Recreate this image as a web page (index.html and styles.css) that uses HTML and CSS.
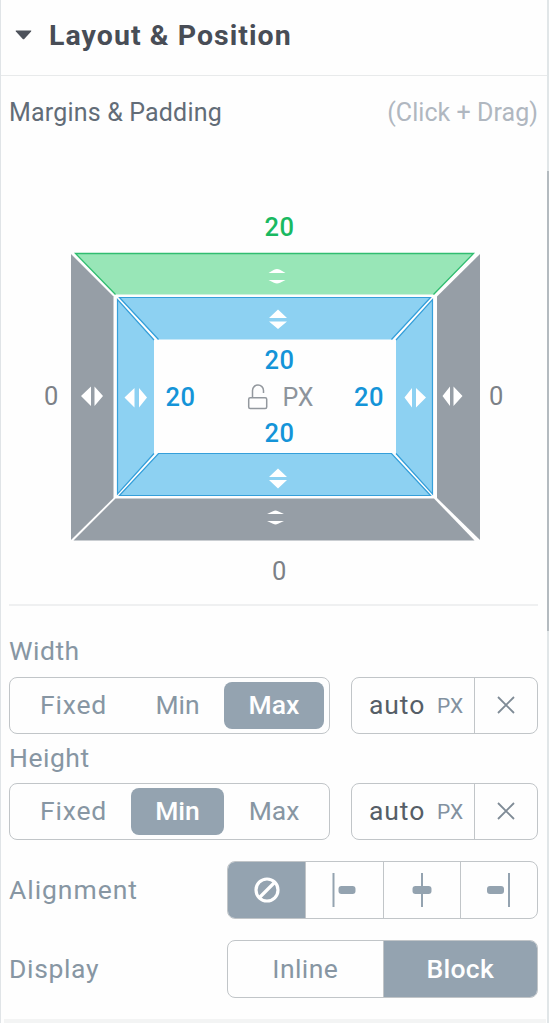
FILE: index.html
```html
<!DOCTYPE html>
<html lang="en">
<head>
<meta charset="utf-8">
<title>Layout &amp; Position</title>
<link rel="stylesheet" href="styles.css">
</head>
<body>
<main class="panel">
  <header class="header">
    <svg class="caret" width="17" height="10" viewBox="0 0 17 10"><path d="M1.2 0.5h14.6q1 0 .3 1L9.5 8.8q-1 1-2 0L.9 1.5q-.7-1 .3-1z"/></svg>
    <h1 class="title">Layout &amp; Position</h1>
  </header>
  <div class="subhead">
    <span class="subtitle">Margins &amp; Padding</span>
    <span class="hint">(Click + Drag)</span>
  </div>
  <svg class="box-model" width="549" height="404" viewBox="0 200 549 404">
    <g class="margin-side">
      <path d="M71 254L113.500 296.500V498L71 540z"/>
      <path d="M480 254L437 296.500V498L480 540z"/>
      <path d="M115.500 498.500H434L474.500 540.500H73.500z"/>
    </g>
    <path class="margin-top" d="M75 253H474L434 294.500H115.500z"/>
    <path class="green-line" d="M115.500 294.500L75.500 253.500H473.500L433.500 294.500"/>
    <g class="padding-side">
      <path d="M119 297.500H431L392 339.500H158z"/>
      <path d="M119 495.500H431L392 453.500H158z"/>
      <path d="M117 299L154 340V454L117 494.500z"/>
      <path d="M433 299L396 340V454L433 494.500z"/>
    </g>
    <g class="blue-line">
      <path d="M158.500 339.500L119.500 297.500H430.500L391.500 339.500"/>
      <path d="M119.500 495.500L158.500 453.500H391.500L430.500 495.500z"/>
      <path d="M154 340L117.500 299.500V494L154 453.500"/>
      <path d="M396 340L432.500 299.500V494L396 453.500"/>
    </g>
    <g class="arrows">
      <path d="M268.500 273L274 269.800q3-1.600 6 0L285.500 273zM268.500 280H285.500L280 282.800q-3 1.600-6 0z"/>
      <path d="M269 318L278 309.500L287 318zM269 321.500H287L278 329z"/>
      <path d="M269 477L278 468.500L287 477zM269 480H287L278 488.500z"/>
      <path d="M267 514L273 511.200q2.500-1.500 5 0L284 514zM267 521H284L278 523.800q-2.500 1.500-5 0z"/>
      <path d="M91 386.500V406L81 396zM94.500 386.500V406L103 396z"/>
      <path d="M134.500 388V407.500L124.500 397.500zM139 388V407.500L147 397.500z"/>
      <path d="M412 388V407.500L404.500 397.500zM416 388V407.500L426 397.500z"/>
      <path d="M450 386.500V406L442.500 396zM453.500 386.500V406L462.500 396z"/>
    </g>
    <g class="lock">
      <rect x="248.700" y="397.700" width="18" height="10.700" rx="1.500"/>
      <path d="M252.500 397.500V390.500a5.500 5.500 0 0 1 11 0v2.500"/>
    </g>
    <g class="value green"><text x="279.500" y="235.500">20</text></g>
    <g class="value blue">
      <text x="279.500" y="368.500">20</text>
      <text x="180.500" y="406">20</text>
      <text x="369" y="406">20</text>
      <text x="279.500" y="442">20</text>
    </g>
    <g class="value gray">
      <text x="51.500" y="404.500">0</text>
      <text x="496.500" y="404.500">0</text>
      <text x="279.500" y="579.500">0</text>
    </g>
    <text class="unit-center" x="298" y="405.500">PX</text>
  </svg>
  <section class="controls">
    <div class="label size-label">Width</div>
    <div class="size-row">
      <div class="segments">
        <span class="segment fixed">Fixed</span><span class="segment min">Min</span><span class="segment max active">Max</span>
      </div>
      <div class="field">
        <span class="auto">auto</span><span class="unit">PX</span>
        <span class="clear"><svg width="18" height="18" viewBox="0 0 18 18"><path d="M1 1l16 16M17 1L1 17"/></svg></span>
      </div>
    </div>
    <div class="label size-label">Height</div>
    <div class="size-row">
      <div class="segments">
        <span class="segment fixed">Fixed</span><span class="segment min active">Min</span><span class="segment max">Max</span>
      </div>
      <div class="field">
        <span class="auto">auto</span><span class="unit">PX</span>
        <span class="clear"><svg width="18" height="18" viewBox="0 0 18 18"><path d="M1 1l16 16M17 1L1 17"/></svg></span>
      </div>
    </div>
    <div class="option-row">
      <span class="label alignment">Alignment</span>
      <div class="button-group four">
        <span class="button active"><svg class="none-icon" width="28" height="28" viewBox="0 0 28 28"><circle cx="14" cy="14" r="11"/><path d="M7 21L21 7"/></svg></span>
        <span class="button"><svg class="align-icon" width="28" height="36" viewBox="0 0 28 36"><path d="M3.500 1v34"/><rect x="8.500" y="14" width="17" height="8" rx="3"/></svg></span>
        <span class="button"><svg class="align-icon" width="28" height="36" viewBox="0 0 28 36"><path d="M14 1v34"/><rect x="4.500" y="14" width="19" height="8" rx="3"/></svg></span>
        <span class="button"><svg class="align-icon" width="28" height="36" viewBox="0 0 28 36"><path d="M24 1v34"/><rect x="2" y="14" width="17" height="8" rx="3"/></svg></span>
      </div>
    </div>
    <div class="option-row">
      <span class="label display">Display</span>
      <div class="button-group two">
        <span class="button inline">Inline</span><span class="button active block">Block</span>
      </div>
    </div>
  </section>
  <div class="next-section"></div>
  <div class="scrollbar"></div>
</main>
</body>
</html>
```
FILE: styles.css
```css
* { box-sizing: border-box; }
body {
  margin: 0;
  background: #fefefe;
  font-family: Roboto, "Liberation Sans", sans-serif;
}
.panel {
  position: relative;
  width: 549px;
  height: 1023px;
  overflow: hidden;
  border-left: 1px solid #e0e4e7;
}
.header {
  display: flex;
  align-items: center;
  height: 76px;
  padding: 0 0 5px 14px;
  border-bottom: 1px solid #e8eaeb;
}
.caret { fill: #4d525b; margin-right: 17px; }
.title {
  margin: 0;
  padding-top: 2px;
  font-size: 28.500px;
  line-height: 36px;
  font-weight: 700;
  color: #484d56;
  letter-spacing: 1.050px;
}
.subhead {
  display: flex;
  justify-content: space-between;
  height: 124px;
  padding: 21px 11px 0 8px;
  font-size: 25px;
  line-height: 32px;
}
.subtitle { color: #626c77; letter-spacing: 0.180px; }
.hint { color: #b0b7c0; letter-spacing: 0.050px; }
.box-model { display: block; margin-left: -1px; }
.margin-side { fill: #969ea6; }
.margin-top { fill: #98e6b7; }
.green-line { fill: none; stroke: #31bd70; stroke-width: 1.300px; }
.padding-side { fill: #8dd1f2; }
.blue-line { fill: none; stroke: #359fda; stroke-width: 1.200px; }
.arrows { fill: #fff; }
.lock { fill: none; stroke: #93989e; stroke-width: 1.500px; }
.value { font-size: 25.500px; text-anchor: middle; letter-spacing: 0.5px; }
.green { fill: #19b961; font-weight: 500; }
.blue { fill: #1494d8; font-weight: 500; }
.gray { fill: #7c8187; }
.unit-center { font-size: 25px; fill: #8d949c; text-anchor: middle; }
.controls {
  height: 415px;
  margin: 0 11px 0 8px;
  border-top: 2px solid #eff0f1;
  padding-top: 29px;
}
.label { font-size: 26.500px; color: #8796a3; letter-spacing: 0.5px; }
.size-label { height: 42px; line-height: 32px; }
.alignment { letter-spacing: 0.950px; padding-bottom: 2px; }
.display { letter-spacing: 0.650px; padding-bottom: 2px; }
.size-row {
  display: flex;
  justify-content: space-between;
  height: 57px;
  margin-bottom: 7px;
}
.size-label + .size-row + .size-label { padding-top: 1px; }
.segments {
  display: flex;
  width: 321px;
  padding: 4px;
  border: 1.500px solid #c1c5c8;
  border-radius: 8px;
}
.segment {
  display: flex;
  align-items: center;
  justify-content: center;
  border-radius: 8px;
  padding-bottom: 2px;
  font-size: 26.500px;
  color: #8796a3;
}
.fixed { width: 117px; padding-left: 2px; letter-spacing: 0.8px; }
.min { width: 93px; }
.max { width: 100px; }
.active { background: #94a3b0; color: #fff; font-weight: 500; }
.field {
  display: flex;
  align-items: center;
  width: 187px;
  border: 1px solid #c1c5c8;
  border-radius: 8px;
}
.auto { width: 68px; margin-left: 17px; padding-bottom: 2px; font-size: 26.500px; letter-spacing: 0.9px; color: #565e67; }
.unit { width: 37px; font-size: 21px; padding-top: 1px; color: #8291a0; }
.clear {
  display: flex;
  flex: 1;
  height: 100%;
  align-items: center;
  justify-content: center;
  padding-bottom: 1px;
  border-left: 1px solid #c1c5c8;
}
.clear svg { stroke: #7f8b96; stroke-width: 1.800px; fill: none; }
.option-row {
  display: flex;
  justify-content: space-between;
  align-items: center;
  height: 58px;
  margin-bottom: 21px;
}
.size-row + .option-row { margin-top: 21px; }
.button-group {
  display: grid;
  width: 311px;
  height: 58px;
  border: 1px solid #c1c5c8;
  border-radius: 8px;
  overflow: hidden;
}
.four { grid-template-columns: repeat(4, 1fr); }
.two { grid-template-columns: repeat(2, 1fr); }
.button {
  display: flex;
  align-items: center;
  justify-content: center;
  font-size: 26.500px;
  color: #8796a3;
}
.inline, .block { padding-bottom: 2px; }
.inline { letter-spacing: 0.4px; }
.block { letter-spacing: 0.3px; }
.button + .button { border-left: 1px solid #c1c5c8; }
.button.active { color: #fff; }
.none-icon { fill: none; stroke: #fff; stroke-width: 3.200px; }
.align-icon { fill: #94a3b0; stroke: #94a3b0; }
.align-icon path { stroke-width: 2px; }
.align-icon rect { stroke: none; }
.next-section { height: 5px; margin: 0 3px; background: #f3f4f4; }
.scrollbar {
  position: absolute;
  top: 0;
  right: 0;
  width: 2px;
  height: 100%;
  background: linear-gradient(#e1e6e8 0 171px, #b4bbc0 171px 631px, #e1e6e8 631px);
}
```
